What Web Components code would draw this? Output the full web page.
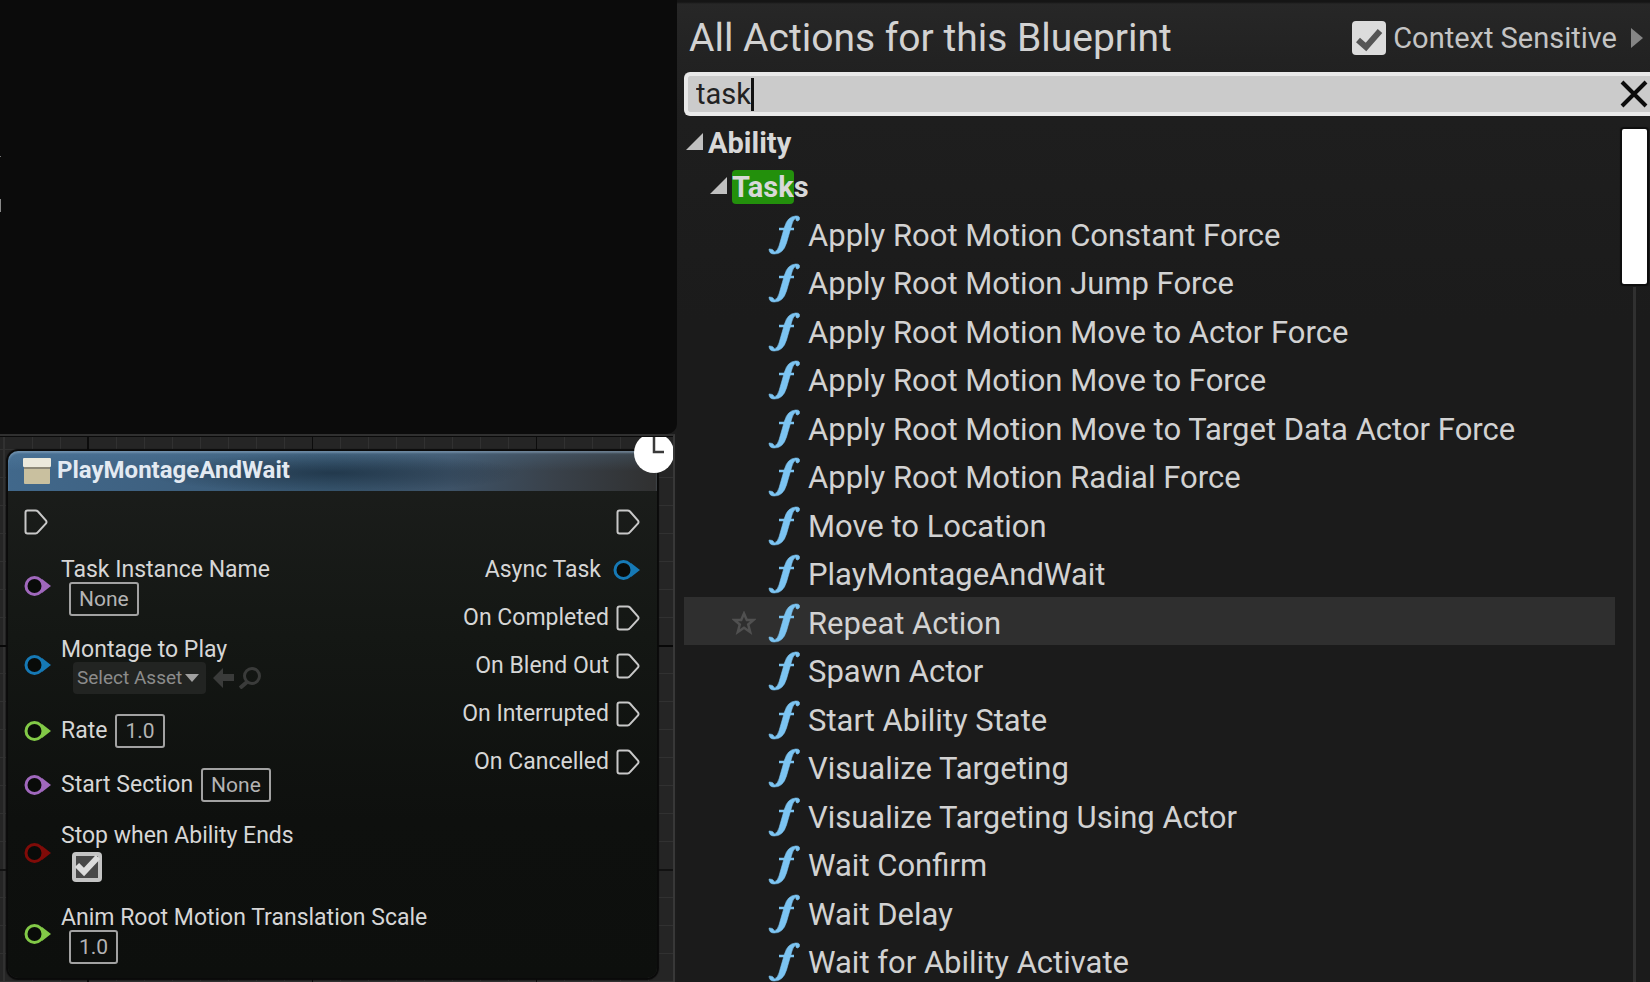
<!DOCTYPE html>
<html lang="en">
<head>
<meta charset="utf-8">
<title>Blueprint Editor</title>
<style>
  html, body {
    height: 100%;
    margin: 0;
    overflow: hidden;
    background: #1c1c1c;
    color: #d2d2d2;
    font-family: Roboto, "Liberation Sans", sans-serif;
  }
</style>
</head>
<body>
<blueprint-editor>
  <graph-canvas slot="graph">
    <graph-node name="PlayMontageAndWait">
      <node-pin slot="in" kind="exec"></node-pin>
      <node-pin slot="in" kind="data" color="#a068bd" label="Task Instance Name" stacked>
        <value-box value="None" label="Task Instance Name"></value-box>
      </node-pin>
      <node-pin slot="in" kind="data" color="#1679b5" label="Montage to Play" stacked>
        <asset-picker></asset-picker>
      </node-pin>
      <node-pin slot="in" kind="data" color="#82c947" label="Rate">
        <value-box value="1.0" label="Rate"></value-box>
      </node-pin>
      <node-pin slot="in" kind="data" color="#a068bd" label="Start Section">
        <value-box value="None" label="Start Section"></value-box>
      </node-pin>
      <node-pin slot="in" kind="data" color="#800b08" label="Stop when Ability Ends" stacked>
        <check-box label="Stop when Ability Ends" variant="node"></check-box>
      </node-pin>
      <node-pin slot="in" kind="data" color="#82c947" label="Anim Root Motion Translation Scale" stacked>
        <value-box value="1.0" label="Anim Root Motion Translation Scale"></value-box>
      </node-pin>

      <node-pin slot="out" kind="exec" output></node-pin>
      <node-pin slot="out" kind="data" color="#1679b5" label="Async Task" output></node-pin>
      <node-pin slot="out" kind="exec" label="On Completed" output></node-pin>
      <node-pin slot="out" kind="exec" label="On Blend Out" output></node-pin>
      <node-pin slot="out" kind="exec" label="On Interrupted" output></node-pin>
      <node-pin slot="out" kind="exec" label="On Cancelled" output></node-pin>
    </graph-node>
  </graph-canvas>

  <action-menu slot="menu" heading="All Actions for this Blueprint">
    <action-category>Ability</action-category>
    <action-category level="2"><mark>Task</mark>s</action-category>
    <action-item>Apply Root Motion Constant Force</action-item>
    <action-item>Apply Root Motion Jump Force</action-item>
    <action-item>Apply Root Motion Move to Actor Force</action-item>
    <action-item>Apply Root Motion Move to Force</action-item>
    <action-item>Apply Root Motion Move to Target Data Actor Force</action-item>
    <action-item>Apply Root Motion Radial Force</action-item>
    <action-item>Move to Location</action-item>
    <action-item>PlayMontageAndWait</action-item>
    <action-item active>Repeat Action</action-item>
    <action-item>Spawn Actor</action-item>
    <action-item>Start Ability State</action-item>
    <action-item>Visualize Targeting</action-item>
    <action-item>Visualize Targeting Using Actor</action-item>
    <action-item>Wait Confirm</action-item>
    <action-item>Wait Delay</action-item>
    <action-item>Wait for Ability Activate</action-item>
  </action-menu>
</blueprint-editor>

<script>
class BaseElement extends HTMLElement {
  constructor() {
    super();
    this.attachShadow({ mode: "open" });
  }

  connectedCallback() {
    const template = document.createElement("template");
    template.innerHTML = this.render();
    this.shadowRoot.replaceChildren(template.content.cloneNode(true));
  }

  attr(name) {
    return this.getAttribute(name) || "";
  }
}

class BlueprintEditor extends BaseElement {
  render() {
    return `
      <style>
        :host {
          display: grid;
          grid-template-columns: minmax(0, 677fr) minmax(0, 973fr);
          height: 100vh;
          overflow: hidden;
        }
        .left {
          display: flex;
          flex-direction: column;
          min-height: 0;
        }
        /* empty viewport, with the edge of a clipped panel on its left */
        .viewport {
          flex: 1;
          border-bottom-right-radius: 10px;
          background:
            linear-gradient(#777, #777) 0 156px / 1px 1px no-repeat,
            linear-gradient(#888, #888) 0 199px / 1px 13px no-repeat,
            #0b0b0b;
        }
        .graph {
          flex: none;
          margin-right: 2px;
          border-top: 2px solid #303030;
          border-right: 2px solid #383838;
        }
      </style>
      <div class="left">
        <div class="viewport"></div>
        <div class="graph"><slot name="graph"></slot></div>
      </div>
      <slot name="menu"></slot>
    `;
  }
}

class GraphCanvas extends BaseElement {
  render() {
    return `
      <style>
        :host {
          display: block;
          overflow: hidden;
          border-top: 1px solid #0a0a0a;
          padding: 14px 16px 4px 8px;
          background:
            linear-gradient(#080808, #080808) 0 208px / 100% 2px no-repeat,
            linear-gradient(#121212, #121212) 0 432px / 100% 2px no-repeat,
            repeating-linear-gradient(90deg, #0c0c0c 0 1px, transparent 1px 224px) 88px 0 / 100% 100%,
            repeating-linear-gradient(90deg, #313131 0 1px, transparent 1px 28px) 4px 0 / 100% 100%,
            repeating-linear-gradient(#313131 0 1px, transparent 1px 28px) 0 12px / 100% 100%,
            #252525;
        }
      </style>
      <slot></slot>
    `;
  }
}

class GraphNode extends BaseElement {
  render() {
    return `
      <style>
        :host {
          display: block;
          position: relative;
          border-radius: 10px;
          background: linear-gradient(#1c1e1c, #141714 35%, #0e100e 70%, #0d0f0d);
          box-shadow: 0 0 1px 2px #0a0a0a;
        }
        header {
          display: flex;
          align-items: center;
          gap: 6px;
          height: 40px;
          padding: 0 15px;
          box-sizing: border-box;
          border-radius: 10px 10px 0 0;
          box-shadow: inset 0 2px 2px rgba(150, 175, 200, 0.5);
          background:
            radial-gradient(ellipse 190px 20px at 50% 55%, rgba(20, 38, 54, 0.6), transparent),
            linear-gradient(rgba(110, 160, 200, 0.2), transparent 50%),
            linear-gradient(90deg, #41688b, #3f6282 20%, #38566f 50%, #3e5368 68%, #39414a 84%, #303030);
        }
        h2 {
          margin: 0;
          padding-bottom: 3px;
          font-size: 24px;
          line-height: 28px;
          font-weight: 700;
          color: #e3eaf2;
        }
        .clock {
          position: absolute;
          top: -19px;
          right: -18px;
        }
        .body {
          display: flex;
          justify-content: space-between;
          padding: 17px 17px 14px 16px;
        }
        .pins {
          display: flex;
          flex-direction: column;
          gap: 20px;
        }
        .out {
          align-items: flex-end;
          margin-left: -80px;
        }
      </style>
      <header>
        <svg width="28" height="28" viewBox="0 0 28 28" aria-hidden="true">
          <rect x="1" y="10" width="26" height="17" rx="1" fill="#c9c09f"/>
          <rect x="0" y="1" width="28" height="9" rx="1" fill="#ece9dc"/>
          <rect x="1" y="10" width="26" height="2" fill="#8d8877"/>
        </svg>
        <h2>${this.attr("name")}</h2>
      </header>
      <svg class="clock" width="42" height="42" viewBox="0 0 42 42" aria-hidden="true">
        <circle cx="21" cy="21" r="20" fill="#fff"/>
        <path d="M21 4V20H31" fill="none" stroke="#3a3a3a" stroke-width="2.5"/>
      </svg>
      <div class="body">
        <div class="pins"><slot name="in"></slot></div>
        <div class="pins out"><slot name="out"></slot></div>
      </div>
    `;
  }
}

class NodePin extends BaseElement {
  icon() {
    if (this.attr("kind") === "exec") {
      return `
        <svg width="24" height="28" viewBox="0 0 24 28" aria-hidden="true">
          <path d="M3.5 2.5H11.5Q13 2.5 14 3.5L22 12.5Q23 14 22 15.5L14 24Q13 25.5 11.5 25.5H3.5Q1.5 25.5 1.5 23.5V4.5Q1.5 2.5 3.5 2.5Z"
            fill="none" stroke="#c8c8c8" stroke-width="2"/>
        </svg>`;
    }
    const color = this.attr("color");
    return `
      <svg width="27" height="28" viewBox="0 0 27 28" aria-hidden="true">
        <path d="M18 7L27 14L18 21Z" fill="${color}"/>
        <circle cx="10.5" cy="14" r="8.5" fill="#090b09" stroke="${color}" stroke-width="3"/>
      </svg>`;
  }

  render() {
    const output = this.hasAttribute("output");
    const label = this.attr("label") ? `<span class="label">${this.attr("label")}</span>` : "";
    const gap = output && this.attr("kind") === "data" ? 12 : 7;
    return `
      <style>
        :host {
          display: flex;
          align-items: center;
          gap: 10px;
          color: #d6d6d6;
          font-size: 23px;
          line-height: 24px;
          white-space: nowrap;
        }
        :host([output]) {
          flex-direction: row-reverse;
          gap: ${gap}px;
          height: 28px;
        }
        svg {
          flex: none;
          display: block;
        }
        .content {
          display: flex;
          align-items: center;
          gap: 8px;
        }
        :host([stacked]) .content {
          flex-direction: column;
          align-items: flex-start;
          gap: 0;
        }
        :host([stacked]) .label {
          padding-top: 2px;
        }
        :host([stacked]) ::slotted(*) {
          margin-left: 8px;
        }
      </style>
      ${this.icon()}
      <div class="content">${label}<slot></slot></div>
    `;
  }
}

class ValueBox extends BaseElement {
  render() {
    return `
      <style>
        :host {
          display: block;
        }
        input {
          display: block;
          field-sizing: content;
          box-sizing: border-box;
          height: 34px;
          padding: 0 8px;
          border: 2px solid #a2a2a2;
          border-radius: 3px;
          outline: none;
          background: transparent;
          color: #b4b4b4;
          font: 21px/30px Roboto, "Liberation Sans", sans-serif;
        }
      </style>
      <input type="text" value="${this.attr("value")}" aria-label="${this.attr("label")}">
    `;
  }
}

class AssetPicker extends BaseElement {
  render() {
    return `
      <style>
        :host {
          display: flex;
          align-items: center;
          gap: 5px;
          height: 32px;
          padding-left: 4px;
        }
        .box {
          display: grid;
          align-items: center;
          margin-right: 2px;
          border-radius: 4px;
          background: #222422;
        }
        .box > * {
          grid-area: 1 / 1;
        }
        select {
          appearance: none;
          height: 32px;
          padding: 0 23px 0 4px;
          border: 0;
          outline: none;
          background: transparent;
          color: #8c8c8c;
          font: 19px/32px Roboto, "Liberation Sans", sans-serif;
        }
        .box svg {
          justify-self: end;
          margin-right: 7px;
          pointer-events: none;
        }
        button {
          display: block;
          padding: 0;
          border: 0;
          background: transparent;
        }
        button svg {
          display: block;
        }
      </style>
      <div class="box">
        <select aria-label="Montage to Play"><option>Select Asset</option></select>
        <svg width="14" height="8" viewBox="0 0 14 8" aria-hidden="true"><path d="M0 0H14L7 8Z" fill="#a0a0a0"/></svg>
      </div>
      <button aria-label="Use selected asset">
        <svg width="21" height="22" viewBox="0 0 21 22"><path d="M0 11L10 1V7H21V14H10V21Z" fill="#3a3b3a"/></svg>
      </button>
      <button aria-label="Browse to asset">
        <svg width="22" height="22" viewBox="0 0 22 22" fill="none" stroke="#3a3b3a">
          <circle cx="13" cy="9" r="7.5" stroke-width="3"/><path d="M8 15L1 21" stroke-width="4"/>
        </svg>
      </button>
    `;
  }
}

class CheckBox extends BaseElement {
  render() {
    const node = this.attr("variant") === "node";
    const mark = node
      ? `<svg width="30" height="30" viewBox="0 0 30 30" aria-hidden="true">
          <rect x="4" y="4" width="22" height="22" fill="#484848"/>
          <path d="M5 13L12 20L26 5" fill="none" stroke="#dcdcdc" stroke-width="6"/>
        </svg>`
      : `<svg width="34" height="34" viewBox="0 0 34 34" aria-hidden="true">
          <path d="M6 19L14 26L28 10" fill="none" stroke="#555" stroke-width="6"/>
        </svg>`;
    return `
      <style>
        :host {
          display: block;
          padding: ${node ? "4px 3px 2px" : "0"};
        }
        label {
          display: flex;
          align-items: center;
          gap: 7px;
        }
        .box {
          display: grid;
        }
        .box > * {
          grid-area: 1 / 1;
        }
        input {
          appearance: none;
          width: ${node ? 30 : 34}px;
          height: ${node ? 30 : 34}px;
          margin: 0;
          border-radius: 4px;
          background: ${node ? "#c4c4c4" : "#dcdcdc"};
        }
        svg {
          pointer-events: none;
        }
        input:not(:checked) + svg {
          visibility: hidden;
        }
      </style>
      <label>
        <span class="box">
          <input type="checkbox" checked aria-label="${this.attr("label")}">
          ${mark}
        </span>
        <slot></slot>
      </label>
    `;
  }
}

class ActionMenu extends BaseElement {
  render() {
    return `
      <style>
        :host {
          display: flex;
          flex-direction: column;
          min-width: 0;
          min-height: 0;
          overflow: hidden;
          background: linear-gradient(#151515 0 2px, #272727 4px, #222 60px, #1e1e1e 120px, #1b1b1b 320px);
        }
        header {
          display: flex;
          align-items: center;
          justify-content: space-between;
          box-sizing: border-box;
          height: 72px;
          padding: 4px 6px 0 12px;
        }
        h1 {
          margin: 0;
          font-size: 39px;
          line-height: 48px;
          font-weight: 400;
        }
        .context {
          display: flex;
          align-items: center;
          gap: 13px;
          font-size: 29px;
          line-height: 34px;
          color: #c4c4c4;
        }
        .search {
          display: flex;
          align-items: center;
          box-sizing: border-box;
          flex: none;
          height: 44px;
          margin-left: 7px;
          padding: 0 2px 0 8px;
          border: 4px solid #e9e9e9;
          border-right: 0;
          border-radius: 6px 0 0 6px;
          background: #cbcbcb;
        }
        .search input {
          field-sizing: content;
          padding: 0;
          border: 0;
          outline: none;
          background: transparent;
          color: #222;
          font: 29px/36px Roboto, "Liberation Sans", sans-serif;
        }
        .caret {
          flex: none;
          width: 3px;
          height: 33px;
          background: #111;
        }
        .search button {
          margin-left: auto;
          padding: 0;
          border: 0;
          background: transparent;
        }
        svg {
          display: block;
        }
        .results {
          display: flex;
          flex: 1;
          min-height: 0;
          margin-left: 7px;
        }
        .list {
          flex: 1;
          padding-top: 5px;
          overflow: hidden;
        }
        .scroll {
          display: flex;
          flex-direction: column;
          align-items: center;
          width: 25px;
          padding: 13px 3px 0 7px;
        }
        .thumb {
          flex: none;
          width: 25px;
          height: 155px;
          border-radius: 2px;
          background: #fff;
          box-shadow: 0 0 1px 2px #0e0e0e;
        }
        .track {
          flex: 1;
          width: 3px;
          margin-top: 3px;
          background: #303030;
        }
      </style>
      <header>
        <h1>${this.attr("heading")}</h1>
        <div class="context">
          <check-box label="Context Sensitive">Context Sensitive</check-box>
          <svg width="14" height="20" viewBox="0 0 14 20" aria-hidden="true"><path d="M1 0L13 10L1 20Z" fill="#858585"/></svg>
        </div>
      </header>
      <div class="search">
        <input type="text" value="task" aria-label="Search actions">
        <span class="caret"></span>
        <button aria-label="Clear search">
          <svg width="28" height="28" viewBox="0 0 28 28"><path d="M2 2L26 26M26 2L2 26" stroke="#0c0c0c" stroke-width="4"/></svg>
        </button>
      </div>
      <div class="results">
        <div class="list"><slot></slot></div>
        <div class="scroll"><div class="thumb"></div><div class="track"></div></div>
      </div>
    `;
  }
}

class ActionCategory extends BaseElement {
  render() {
    return `
      <style>
        :host {
          display: flex;
          align-items: center;
          gap: 5px;
          height: 44px;
          padding-left: 2px;
          font-size: 29px;
          line-height: 34px;
          font-weight: 700;
          color: #d8d8d8;
        }
        :host([level="2"]) {
          padding-left: 26px;
        }
        svg {
          margin-bottom: 3px;
        }
        ::slotted(mark) {
          border-radius: 4px;
          background: #23900c;
          color: inherit;
        }
      </style>
      <svg width="17" height="17" viewBox="0 0 17 17" aria-hidden="true"><path d="M17 0V17H0Z" fill="#c0c0c0"/></svg>
      <span><slot></slot></span>
    `;
  }
}

class ActionItem extends BaseElement {
  render() {
    return `
      <style>
        :host {
          display: flex;
          align-items: center;
          box-sizing: border-box;
          height: 48px;
          padding: 3px 0 0 48px;
          font-size: 31px;
          line-height: 36px;
          white-space: nowrap;
        }
        /* rows alternate between 48 and 49 pixels */
        :host(:nth-child(even)) {
          height: 49px;
        }
        :host([active]) {
          background: #2f2f2f;
        }
        .star {
          visibility: hidden;
          margin-right: 12px;
        }
        :host([active]) .star {
          visibility: visible;
        }
        .func {
          margin-right: 8px;
        }
        span {
          padding-top: 2px;
        }
      </style>
      <svg class="star" width="24" height="24" viewBox="0 0 24 24" aria-hidden="true">
        <path d="M12 2.5L14.8 9H21.5L16.2 13.5L18.2 21L12 16.8L5.8 21L7.8 13.5L2.5 9H9.2Z"
          fill="none" stroke="#505050" stroke-width="2.5"/>
      </svg>
      <svg class="func" width="32" height="40" viewBox="0 0 32 40" aria-hidden="true">
        <path d="M1 34Q1 39 6 39Q15 39.5 18.5 28L24 9Q25.5 3.5 28 3.5Q27.5 6 29.5 6Q32 5.5 31.5 2.5Q31 0.5 27.5 1Q19.5 1.5 16.5 12L11 31Q9.5 36.5 6 37Q6 34 1 34Z"
          fill="#7cc4f2" stroke="#7cc4f2" stroke-width="0.6"/>
        <path d="M11 14H26" stroke="#7cc4f2" stroke-width="2.5"/>
      </svg>
      <span><slot></slot></span>
    `;
  }
}

customElements.define("blueprint-editor", BlueprintEditor);
customElements.define("graph-canvas", GraphCanvas);
customElements.define("graph-node", GraphNode);
customElements.define("node-pin", NodePin);
customElements.define("value-box", ValueBox);
customElements.define("asset-picker", AssetPicker);
customElements.define("check-box", CheckBox);
customElements.define("action-menu", ActionMenu);
customElements.define("action-category", ActionCategory);
customElements.define("action-item", ActionItem);
</script>
</body>
</html>
